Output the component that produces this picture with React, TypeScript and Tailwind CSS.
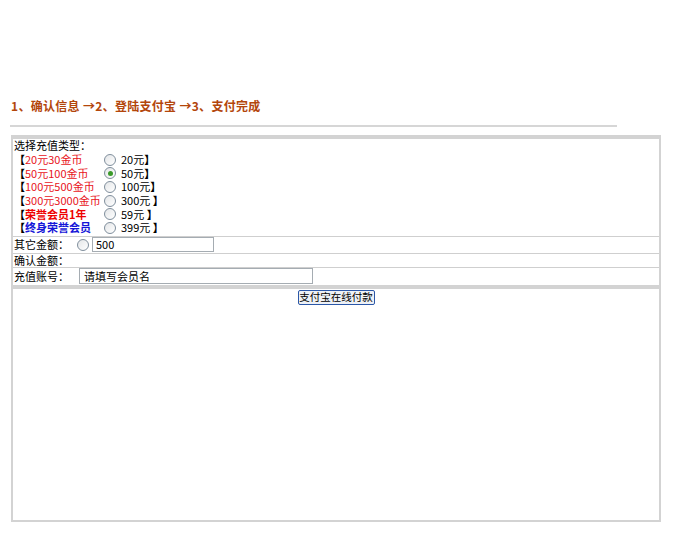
const font = "font-['SimSun','Noto_Sans_CJK_SC',sans-serif]"

const types = [
  { label: "20元30金币", value: "20元", cls: "text-[#e8141b]" },
  { label: "50元100金币", value: "50元", cls: "text-[#e8141b]", checked: true },
  { label: "100元500金币", value: "100元", cls: "text-[#e8141b]" },
  { label: "300元3000金币", value: "300元 ", cls: "text-[#e8141b]" },
  { label: "荣誉会员1年", value: "59元 ", cls: "text-[#ee0000] font-bold" },
  { label: "终身荣誉会员", value: "399元 ", cls: "text-[#1515d8] font-bold" },
]

function Radio({ checked }: { checked?: boolean }) {
  return (
    <span className="inline-flex h-[12px] w-[12px] shrink-0 items-center justify-center rounded-full border border-[#7f8e9c] bg-gradient-to-br from-[#e4e6e8] to-white">
      {checked && <span className="h-[5px] w-[5px] rounded-full bg-[#3a9a2a]" />}
    </span>
  )
}

export default function App() {
  return (
    <div className={`h-[550px] w-[680px] bg-white ${font} text-[11px] leading-[13px] text-black`}>
      <div className="whitespace-pre pl-[11px] pt-[98px] text-[12px] font-bold leading-[15px] tracking-[0.3px] text-[#b3460b]">
        1、确认信息 →2、登陆支付宝 →3、支付完成
      </div>
      <div className="ml-[10px] mt-[12px] h-[2px] w-[607px] bg-[#d6d6d6]" />

      <div className="ml-[11px] mt-[8px] flex h-[387px] w-[650px] flex-col border-x-2 border-b-2 border-t-4 border-[#d3d3d3]">
        {/* type choices */}
        <div className="flex flex-col border-b border-[#cfcfcf] pb-[1px] pl-[1px]">
          <div className="flex h-[13.7px] items-center">选择充值类型：</div>
          {types.map((t, i) => (
            <div key={i} className="flex h-[13.7px] items-center">
              <div className="flex w-[90px] whitespace-nowrap">
                <span className="font-bold">【</span>
                <span className={t.cls}>{t.label}</span>
              </div>
              <Radio checked={t.checked} />
              <div className="ml-[5px] flex whitespace-pre">
                <span>{t.value}</span>
                <span className="font-bold">】</span>
              </div>
            </div>
          ))}
        </div>

        <div className="flex h-[17px] items-center border-b border-[#cfcfcf] pl-[1px]">
          <span className="w-[63px]">其它金额：</span>
          <Radio />
          <span className="ml-[3px] flex h-[15px] w-[122px] items-center border border-[#a5acb2] pl-[3px]">500</span>
        </div>

        <div className="flex h-[14px] items-center border-b border-[#cfcfcf] pl-[1px]">确认金额：</div>

        <div className="flex h-[17px] items-center pl-[1px]">
          <span className="w-[65px]">充值账号：</span>
          <span className="flex h-[16px] w-[234px] items-center border border-[#a5acb2] pl-[4px]">请填写会员名</span>
        </div>

        <div className="flex flex-1 justify-center border-t-4 border-[#d3d3d3] pt-[1px]">
          <button className="flex h-[15px] w-[77px] items-center justify-center rounded-[2px] border border-[#2b57a8] bg-[#eef1f6] p-0 text-[10.5px] leading-[12px] text-black">
            支付宝在线付款
          </button>
        </div>
      </div>
    </div>
  )
}
